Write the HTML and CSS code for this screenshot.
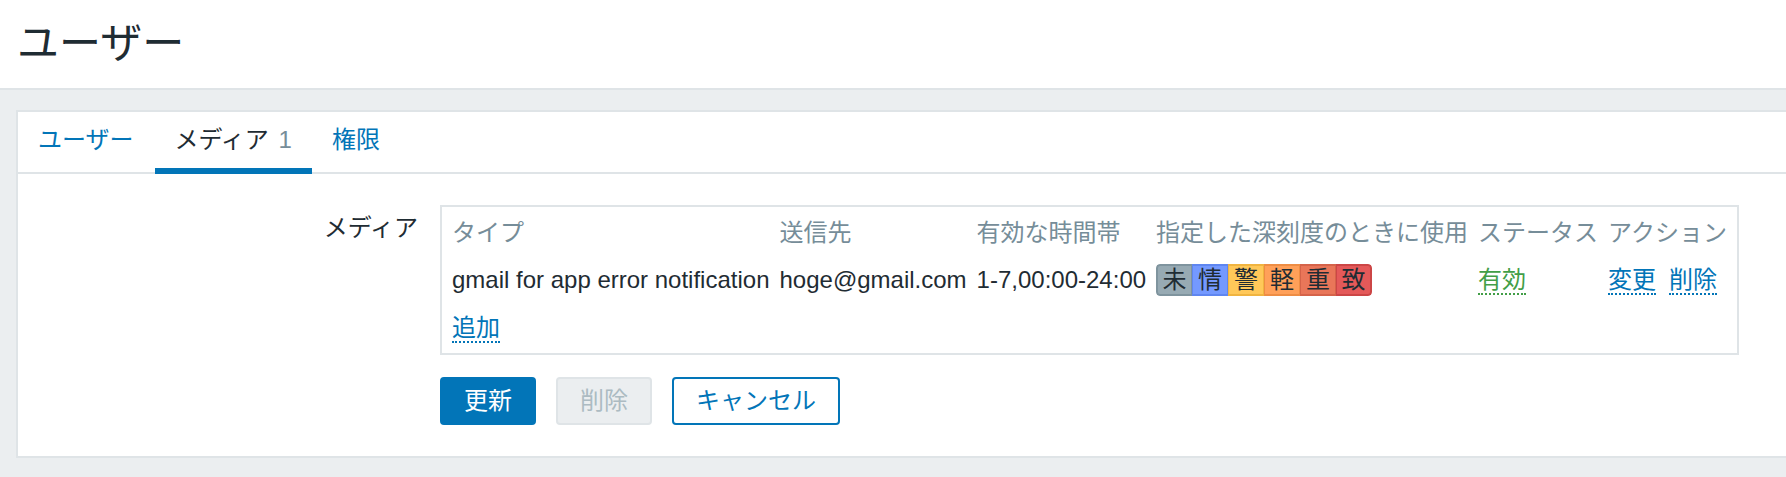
FILE: index.html
```html
<!DOCTYPE html>
<html lang="ja">
<head>
<meta charset="utf-8">
<title>ユーザー</title>
<link rel="stylesheet" href="styles.css">
</head>
<body>
<header class="header">
  <h1 class="title">ユーザー</h1>
</header>
<main class="panel">
  <nav class="tabs">
    <a class="tab">ユーザー</a>
    <a class="tab active">メディア <span class="count">1</span></a>
    <a class="tab">権限</a>
  </nav>
  <div class="form">
    <div class="label">メディア</div>
    <div class="mediabox">
      <table class="media">
        <thead>
          <tr>
            <th>タイプ</th>
            <th>送信先</th>
            <th>有効な時間帯</th>
            <th>指定した深刻度のときに使用</th>
            <th>ステータス</th>
            <th>アクション</th>
          </tr>
        </thead>
        <tbody>
          <tr class="datarow">
            <td>gmail for app error notification</td>
            <td>hoge@gmail.com</td>
            <td>1-7,00:00-24:00</td>
            <td>
              <div class="sev">
                <span class="s0">未</span><span class="s1">情</span><span class="s2">警</span><span class="s3">軽</span><span class="s4">重</span><span class="s5">致</span>
              </div>
            </td>
            <td><span class="status">有効</span></td>
            <td><span class="link">変更</span><span class="link second">削除</span></td>
          </tr>
          <tr class="addrow">
            <td colspan="6"><span class="link">追加</span></td>
          </tr>
        </tbody>
      </table>
    </div>
    <div class="buttons">
      <button class="btn">更新</button>
      <button class="btn disabled">削除</button>
      <button class="btn alt">キャンセル</button>
    </div>
  </div>
</main>
</body>
</html>
```

FILE: styles.css
```css
* {
  box-sizing: border-box;
}

html,
body {
  margin: 0;
}

body {
  background: #ebeef0;
  font-family: "Liberation Sans", "Noto Sans CJK JP", sans-serif;
  font-size: 24px;
  color: #1f2c33;
  overflow: hidden;
}

.header {
  background: #fff;
  height: 90px;
  border-bottom: 2px solid #dfe4e7;
  padding-left: 17px;
  display: flex;
  align-items: center;
}

.title {
  margin: 0;
  font-size: 42px;
  font-weight: normal;
  line-height: 50px;
}

.panel {
  margin: 20px -10px 0 16px;
  background: #fff;
  border: 2px solid #dfe4e7;
}

.tabs {
  display: flex;
  height: 62px;
  border-bottom: 2px solid #dfe4e7;
}

.tab {
  height: 62px;
  margin-bottom: -2px;
  padding: 0 21px 0 20px;
  line-height: 56px;
  border-bottom: 6px solid transparent;
  color: #0275b8;
  white-space: nowrap;
}

.tab.active {
  color: #1f2c33;
  border-bottom-color: #0275b8;
  padding-right: 20px;
}

.count {
  color: #768d99;
  margin-left: 3px;
}

.form {
  display: grid;
  grid-template-columns: 400px max-content;
  column-gap: 22px;
  row-gap: 22px;
  padding: 31px 0 31px 0;
}

.label {
  text-align: right;
  padding-top: 9px;
  line-height: 28px;
}

.mediabox {
  border: 2px solid #dfe4e7;
  padding: 0 5px;
}

.media {
  border-collapse: collapse;
}

.media th {
  font-weight: normal;
  color: #768d99;
  text-align: left;
  padding: 12px 5px 8px;
  line-height: 28px;
  white-space: nowrap;
}

.media td {
  padding: 0 5px;
  height: 50px;
  line-height: 28px;
  white-space: nowrap;
  vertical-align: middle;
}

.media .addrow td {
  height: auto;
  padding: 9px 5px 11px;
}

.link {
  color: #0275b8;
  border-bottom: 2px dotted #0275b8;
}

.link.second {
  margin-left: 13px;
}

.status {
  color: #429e47;
  border-bottom: 2px dotted #429e47;
}

.sev {
  display: flex;
  width: max-content;
  border-radius: 4px;
  overflow: hidden;
}

.sev span {
  width: 36px;
  height: 32px;
  line-height: 28px;
  text-align: center;
  border-style: solid;
  border-width: 2px 1px;
}

.sev span:first-child {
  border-left-width: 2px;
  border-radius: 4px 0 0 4px;
}

.sev span:last-child {
  border-right-width: 2px;
  border-radius: 0 4px 4px 0;
}

.s0 { background: #97aab3; border-color: #7f949e; }
.s1 { background: #7499ff; border-color: #5f86f0; }
.s2 { background: #ffc859; border-color: #f0b440; }
.s3 { background: #ffa059; border-color: #ee8d44; }
.s4 { background: #e97659; border-color: #d5634a; }
.s5 { background: #e45959; border-color: #cc4646; }

.buttons {
  grid-column: 2;
  display: flex;
  gap: 20px;
}

.btn {
  height: 48px;
  padding: 0 22px;
  border: 2px solid #0275b8;
  border-radius: 4px;
  background: #0275b8;
  color: #fff;
  font: inherit;
  line-height: 44px;
}

.btn.disabled {
  background: #ebeef0;
  border-color: #dfe4e7;
  color: #acbbc2;
}

.btn.alt {
  background: #fff;
  color: #0275b8;
}
```
